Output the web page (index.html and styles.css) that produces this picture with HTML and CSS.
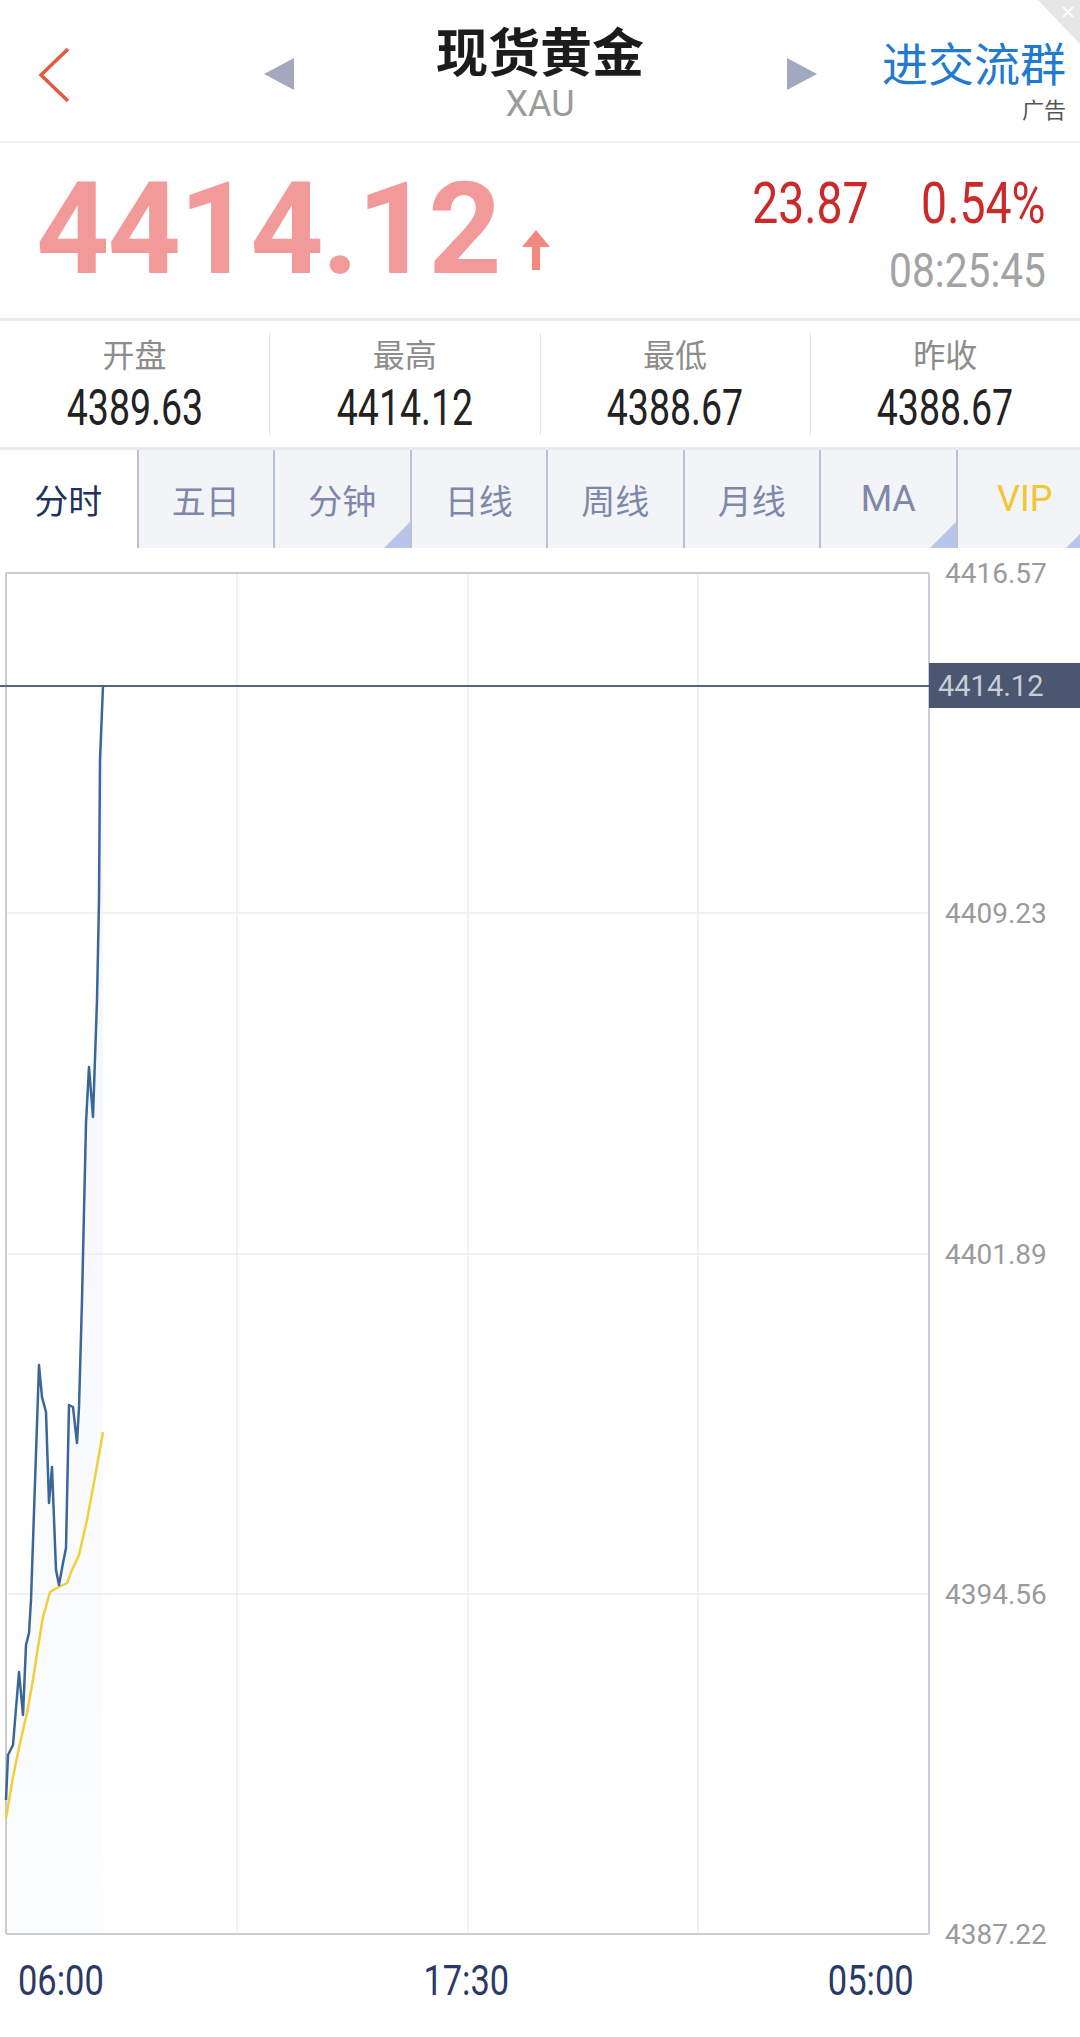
FILE: index.html
```html
<!DOCTYPE html>
<html lang="zh-CN">
<head>
    <meta charset="UTF-8">
    <meta name="viewport" content="width=device-width, initial-scale=1.0">
    <title>现货黄金 XAU</title>
    <link rel="stylesheet" href="styles.css">
</head>
<body>
<div class="page">
    <!-- Top bar -->
    <header class="top-bar">
        <div class="back">
            <svg width="34" height="56" viewBox="0 0 34 56">
                <polyline points="31,2 4,28 31,54" fill="none" stroke="#e4583f" stroke-width="3.5" stroke-linejoin="miter"/>
            </svg>
        </div>
        <div class="symbol-nav">
            <span class="tri tri-left"></span>
            <div class="symbol">
                <h1>现货黄金</h1>
                <div class="code">XAU</div>
            </div>
            <span class="tri tri-right"></span>
        </div>
        <div class="ad">
            <div class="ad-link">进交流群</div>
            <div class="ad-tag">广告</div>
        </div>
        <svg class="ad-close" width="42" height="46" viewBox="0 0 42 46">
            <polygon points="0,0 42,0 42,44" fill="#e6e6e6"/>
            <line x1="25" y1="7" x2="35" y2="17" stroke="#fff" stroke-width="2"/>
            <line x1="35" y1="7" x2="25" y2="17" stroke="#fff" stroke-width="2"/>
        </svg>
    </header>

    <!-- Last price -->
    <section class="quote">
        <div class="last">
            <span>4414.12</span>
            <svg width="30" height="40" viewBox="0 0 30 40">
                <polygon points="15,0 29,17 19,17 19,40 11,40 11,17 1,17" fill="#f2897f"/>
            </svg>
        </div>
        <div class="change">
            <div class="change-row">
                <span>23.87</span>
                <span>0.54%</span>
            </div>
            <div class="time"><span>08:25:45</span></div>
        </div>
    </section>

    <!-- Open / high / low / prev close -->
    <section class="stats">
        <div class="stat">
            <div class="stat-label">开盘</div>
            <div class="stat-value"><span>4389.63</span></div>
        </div>
        <div class="stat">
            <div class="stat-label">最高</div>
            <div class="stat-value"><span>4414.12</span></div>
        </div>
        <div class="stat">
            <div class="stat-label">最低</div>
            <div class="stat-value"><span>4388.67</span></div>
        </div>
        <div class="stat">
            <div class="stat-label">昨收</div>
            <div class="stat-value"><span>4388.67</span></div>
        </div>
    </section>

    <!-- Period tabs -->
    <nav class="tabs">
        <div class="tab active">分时</div>
        <div class="tab">五日</div>
        <div class="tab more">分钟</div>
        <div class="tab">日线</div>
        <div class="tab">周线</div>
        <div class="tab">月线</div>
        <div class="tab more latin">MA</div>
        <div class="tab more latin vip">VIP</div>
    </nav>

    <!-- Intraday chart -->
    <svg class="chart" width="1080" height="1405" viewBox="0 0 1080 1405">
        <defs>
            <linearGradient id="area" x1="0" y1="0" x2="0" y2="1">
                <stop offset="0" stop-color="#e3ebf6" stop-opacity="0.45"/>
                <stop offset="1" stop-color="#e3ebf6" stop-opacity="0.12"/>
            </linearGradient>
        </defs>

        <!-- grid -->
        <g class="grid">
            <line x1="237" y1="25" x2="237" y2="1386"/>
            <line x1="468" y1="25" x2="468" y2="1386"/>
            <line x1="698" y1="25" x2="698" y2="1386"/>
            <line x1="6" y1="365" x2="929" y2="365"/>
            <line x1="6" y1="706" x2="929" y2="706"/>
            <line x1="6" y1="1046" x2="929" y2="1046"/>
        </g>

        <!-- area under price -->
        <polygon fill="url(#area)" points="6,1252 8,1207 13,1197 19,1124 23,1167 26,1097 29,1085 31,1052 39,817 42,849 46,864 49,955 52,919 56,1022 59,1037 63,1015 66,1000 69,857 73,859 77,895 79,859 82,752 86,575 89,519 93,569 97,452 99,352 100,212 103,138 103,1386 6,1386"/>

        <!-- frame -->
        <line x1="6" y1="25" x2="929" y2="25" class="frame-top"/>
        <line x1="6" y1="25" x2="6" y2="1386" class="frame-top"/>
        <line x1="929" y1="25" x2="929" y2="1386" class="frame"/>
        <line x1="6" y1="1386" x2="929" y2="1386" class="frame"/>

        <!-- last price line -->
        <line x1="0" y1="138" x2="929" y2="138" class="last-line"/>

        <!-- average -->
        <polyline class="avg" points="6,1270 13,1229 20,1195 27,1165 33,1132 38,1099 43,1069 50,1044 57,1040 63,1037 67,1035 72,1022 79,1007 87,972 95,929 103,884"/>

        <!-- price -->
        <polyline class="price" points="6,1252 8,1207 13,1197 19,1124 23,1167 26,1097 29,1085 31,1052 39,817 42,849 46,864 49,955 52,919 56,1022 59,1037 63,1015 66,1000 69,857 73,859 77,895 79,859 82,752 86,575 89,519 93,569 97,452 99,352 100,212 103,138"/>

        <!-- y axis -->
        <text class="ylab" x="945" y="25">4416.57</text>
        <text class="ylab" x="945" y="365">4409.23</text>
        <text class="ylab" x="945" y="706">4401.89</text>
        <text class="ylab" x="945" y="1046">4394.56</text>
        <text class="ylab" x="945" y="1386">4387.22</text>

        <rect x="929" y="115" width="151" height="45" fill="#4b5670"/>
        <text class="ylab tag" x="938" y="138">4414.12</text>
    </svg>

    <div class="axis-x">
        <span>06:00</span>
        <span>17:30</span>
        <span>05:00</span>
    </div>
</div>
</body>
</html>
```

FILE: styles.css
```css
/* Global */
body {
    margin: 0;
    background: #fff;
    font-family: "Noto Sans CJK SC", "Noto Sans", sans-serif;
    color: #222;
}

.page {
    width: 1080px;
}

/* Top bar */
.top-bar {
    position: relative;
    height: 141px;
    border-bottom: 2px solid #f1f1f1;
    display: grid;
    grid-template-columns: 1fr auto 1fr;
}

.back {
    padding: 47px 0 0 37px;
}

.symbol-nav {
    display: flex;
    align-items: flex-start;
}

.tri {
    margin-top: 58px;
    width: 0;
    height: 0;
    border-top: 16px solid transparent;
    border-bottom: 16px solid transparent;
}

.tri-left {
    border-right: 30px solid #a2a8bf;
}

.tri-right {
    border-left: 30px solid #a2a8bf;
}

.symbol {
    width: 493px;
    text-align: center;
}

.symbol h1 {
    margin: 24px 0 0;
    font-size: 52px;
    line-height: 52px;
    font-weight: 700;
    color: #1c1c1c;
}

.code {
    margin-top: 10px;
    font-family: Roboto, sans-serif;
    font-size: 36px;
    line-height: 36px;
    color: #9b9b9b;
}

.ad {
    justify-self: end;
    padding: 38px 14px 0 0;
    text-align: right;
}

.ad-link {
    font-size: 46px;
    line-height: 46px;
    color: #1f7ad0;
}

.ad-tag {
    margin-top: 13px;
    font-size: 22px;
    line-height: 22px;
    color: #555;
}

.ad-close {
    position: absolute;
    top: 0;
    right: 0;
}

/* Last price */
.quote {
    height: 175px;
    border-bottom: 3px solid #ececec;
    display: flex;
    justify-content: space-between;
    padding: 0 34px 0 36px;
}

.last {
    margin-top: 22px;
    display: flex;
    align-items: flex-end;
    height: 128px;
    font-family: Roboto, sans-serif;
    font-weight: 700;
    font-size: 128px;
    line-height: 128px;
    letter-spacing: -2px;
    color: #f29a9a;
}

.last svg {
    margin: 0 0 23px 21px;
}

/* the app uses a condensed numeral face; Roboto is narrowed to match */
.change {
    margin-top: 31px;
    font-family: Roboto, sans-serif;
}

.change-row {
    display: flex;
    justify-content: flex-end;
    gap: 22px;
    font-size: 58px;
    line-height: 58px;
    color: #cc2a2a;
}

.change-row span,
.time span {
    display: inline-block;
    transform: scaleX(0.8);
    transform-origin: right center;
}

.time {
    margin-top: 14px;
    text-align: right;
    font-size: 49px;
    line-height: 49px;
    color: #a3a3a3;
}

.time span {
    transform: scaleX(0.83);
}

/* Stats */
.stats {
    display: flex;
    height: 102px;
    padding: 12px 0;
    border-bottom: 3px solid #e9e9e9;
}

.stat {
    flex: 1;
    text-align: center;
    padding-top: 4px;
}

.stat + .stat {
    border-left: 1px solid #e3e3e3;
}

.stat-label {
    font-size: 32px;
    line-height: 32px;
    color: #8c8c8c;
}

.stat-value {
    margin-top: 14px;
    font-family: Roboto, sans-serif;
    font-size: 50px;
    line-height: 50px;
    color: #222;
}

.stat-value span {
    display: inline-block;
    transform: scaleX(0.75);
}

/* Tabs */
.tabs {
    display: flex;
    height: 98px;
    overflow: hidden;
}

.tab {
    position: relative;
    flex: none;
    width: 136.5px;
    box-sizing: border-box;
    display: flex;
    align-items: center;
    justify-content: center;
    background: #f3f4f7;
    font-size: 34px;
    color: #7e88aa;
}

.tab + .tab {
    border-left: 2px solid #b9c1da;
}

.tab.active {
    background: #fff;
    color: #22325e;
}

.tab.latin {
    font-family: Roboto, sans-serif;
    font-size: 36px;
}

.tab.vip {
    color: #f1c535;
}

.tab.more::after {
    content: "";
    position: absolute;
    right: 0;
    bottom: 0;
    border-left: 26px solid transparent;
    border-bottom: 26px solid #b8c4ea;
}

/* Chart */
.chart {
    display: block;
}

.grid line {
    stroke: #eceef2;
    stroke-width: 1.5;
}

.frame-top {
    stroke: #cbcbcb;
    stroke-width: 2;
}

.frame {
    stroke: #c9cdd9;
    stroke-width: 2;
}

.last-line {
    stroke: #56647f;
    stroke-width: 2;
}

.price {
    fill: none;
    stroke: #3a6698;
    stroke-width: 2.5;
    stroke-linejoin: round;
}

.avg {
    fill: none;
    stroke: #f2cf3a;
    stroke-width: 2.5;
    stroke-linejoin: round;
}

.ylab {
    font-family: Roboto, sans-serif;
    font-size: 28px;
    fill: #9a9a9a;
    dominant-baseline: central;
}

.ylab.tag {
    font-size: 29px;
    fill: #c9cdd5;
}

/* Time axis */
.axis-x {
    display: flex;
    justify-content: space-between;
    width: 896px;
    padding-left: 18px;
    margin-top: 3px;
    font-family: Roboto, sans-serif;
    font-size: 42px;
    line-height: 50px;
    color: #2a3966;
}

.axis-x span {
    display: inline-block;
    transform: scaleX(0.82);
}

.axis-x span:first-child {
    transform-origin: left center;
}

.axis-x span:last-child {
    transform-origin: right center;
}
```
